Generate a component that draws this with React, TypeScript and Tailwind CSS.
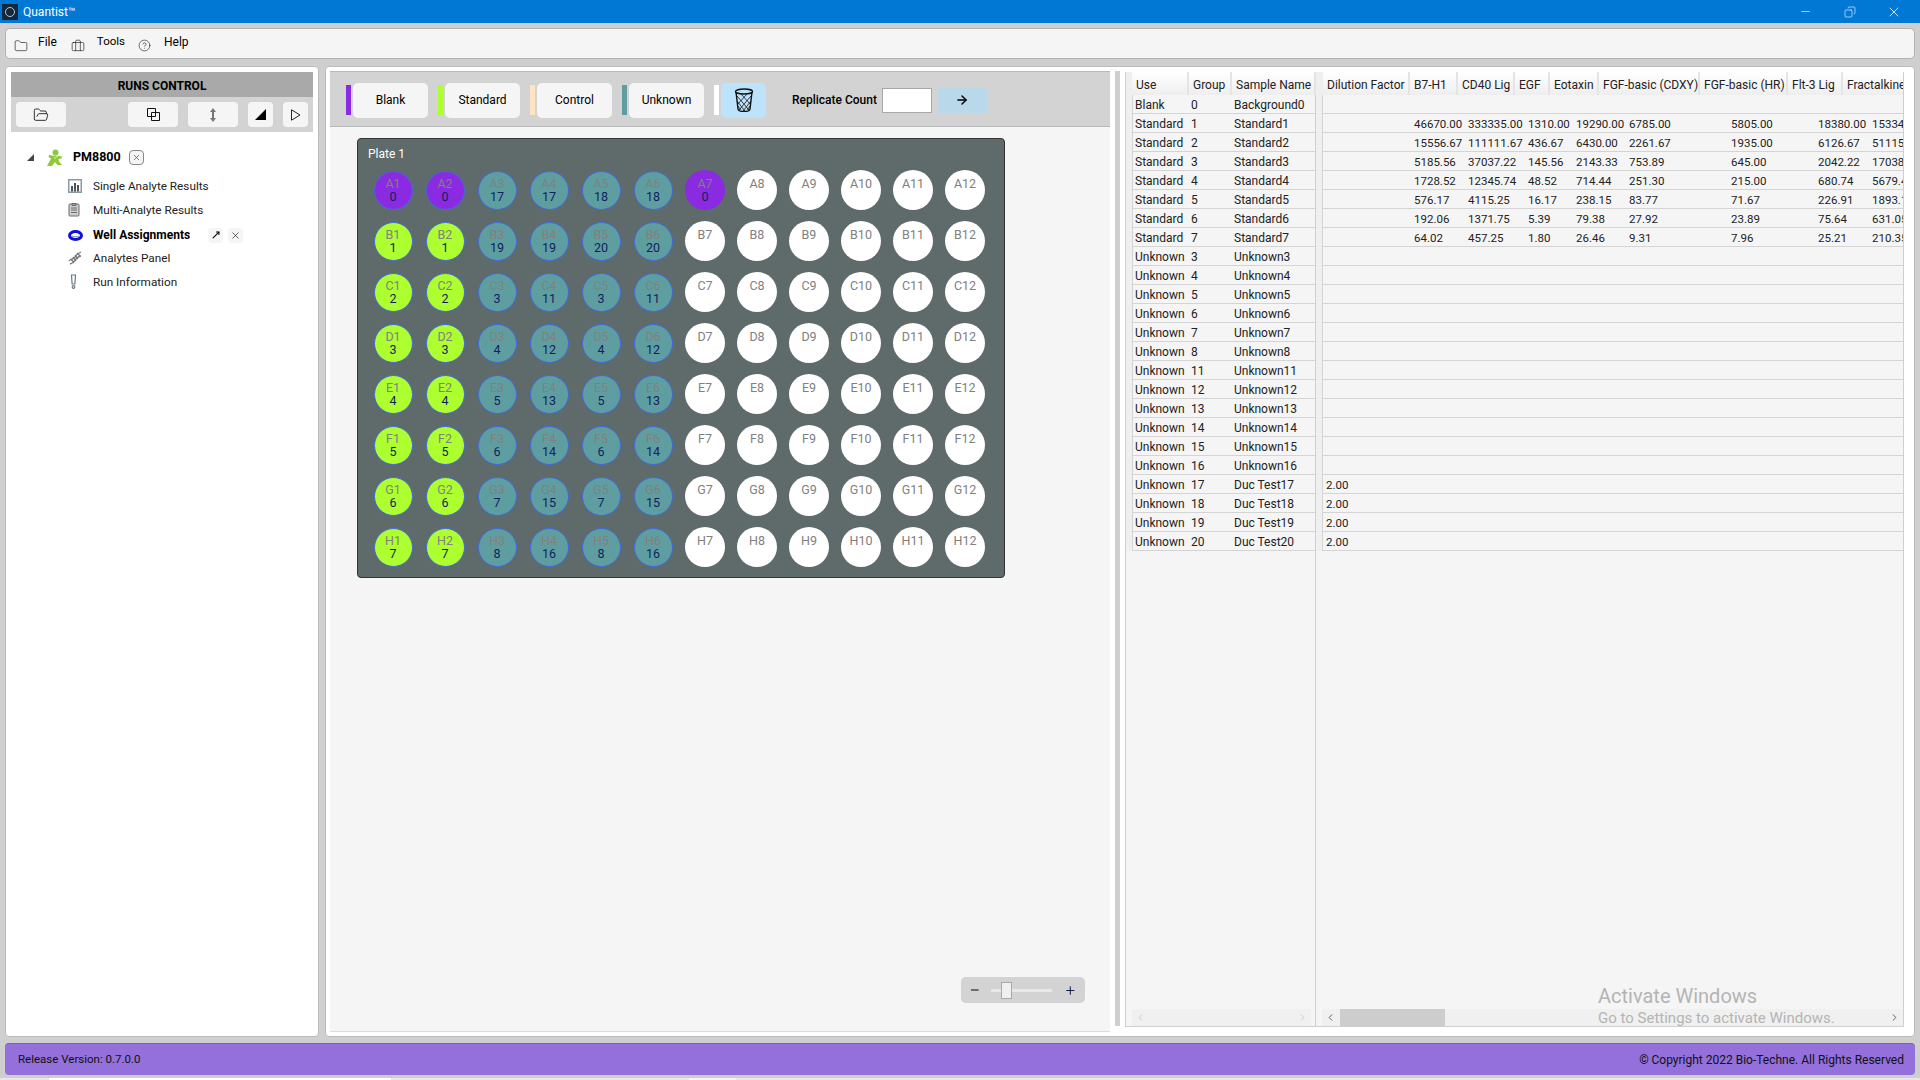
import {
  ArrowRight,
  ChevronLeft,
  ChevronRight,
  CircleHelp,
  Copy,
  Folder,
  FolderOpen,
  Minus,
  MoveUpRight,
  Plus,
  Briefcase,
  X,
} from 'lucide-react'

const WELL_COLORS = {
  blank: 'bg-[#8a2be2]',
  standard: 'bg-[#adff2f]',
  unknown: 'bg-[#5f9ea0]',
  empty: 'bg-white',
}

const ROW_LETTERS = ['A', 'B', 'C', 'D', 'E', 'F', 'G', 'H']
const UNKNOWN_GROUPS = [
  [17, 17, 18, 18],
  [19, 19, 20, 20],
  [3, 11, 3, 11],
  [4, 12, 4, 12],
  [5, 13, 5, 13],
  [6, 14, 6, 14],
  [7, 15, 7, 15],
  [8, 16, 8, 16],
]

const SAMPLES: [string, string, string, string?][] = [
  ['Blank', '0', 'Background0'],
  ['Standard', '1', 'Standard1'],
  ['Standard', '2', 'Standard2'],
  ['Standard', '3', 'Standard3'],
  ['Standard', '4', 'Standard4'],
  ['Standard', '5', 'Standard5'],
  ['Standard', '6', 'Standard6'],
  ['Standard', '7', 'Standard7'],
  ['Unknown', '3', 'Unknown3'],
  ['Unknown', '4', 'Unknown4'],
  ['Unknown', '5', 'Unknown5'],
  ['Unknown', '6', 'Unknown6'],
  ['Unknown', '7', 'Unknown7'],
  ['Unknown', '8', 'Unknown8'],
  ['Unknown', '11', 'Unknown11'],
  ['Unknown', '12', 'Unknown12'],
  ['Unknown', '13', 'Unknown13'],
  ['Unknown', '14', 'Unknown14'],
  ['Unknown', '15', 'Unknown15'],
  ['Unknown', '16', 'Unknown16'],
  ['Unknown', '17', 'Duc Test17', '2.00'],
  ['Unknown', '18', 'Duc Test18', '2.00'],
  ['Unknown', '19', 'Duc Test19', '2.00'],
  ['Unknown', '20', 'Duc Test20', '2.00'],
]

const CONCENTRATIONS: Record<number, string[]> = {
  1: ['46670.00', '333335.00', '1310.00', '19290.00', '6785.00', '5805.00', '18380.00', '153345.00'],
  2: ['15556.67', '111111.67', '436.67', '6430.00', '2261.67', '1935.00', '6126.67', '51115.00'],
  3: ['5185.56', '37037.22', '145.56', '2143.33', '753.89', '645.00', '2042.22', '17038.33'],
  4: ['1728.52', '12345.74', '48.52', '714.44', '251.30', '215.00', '680.74', '5679.44'],
  5: ['576.17', '4115.25', '16.17', '238.15', '83.77', '71.67', '226.91', '1893.15'],
  6: ['192.06', '1371.75', '5.39', '79.38', '27.92', '23.89', '75.64', '631.05'],
  7: ['64.02', '457.25', '1.80', '26.46', '9.31', '7.96', '25.21', '210.35'],
}

const HEADERS = [
  { label: 'Dilution Factor', w: 'w-[87px]' },
  { label: 'B7-H1', w: 'w-[48px]' },
  { label: 'CD40 Lig', w: 'w-[57px]' },
  { label: 'EGF', w: 'w-[35px]' },
  { label: 'Eotaxin', w: 'w-[49px]' },
  { label: 'FGF-basic (CDXY)', w: 'w-[101px]' },
  { label: 'FGF-basic (HR)', w: 'w-[88px]' },
  { label: 'Flt-3 Lig', w: 'w-[55px]' },
  { label: 'Fractalkine', w: 'w-[62px]' },
]

const DATA_WIDTHS = ['w-[54px]', 'w-[60px]', 'w-[48px]', 'w-[53px]', 'w-[102px]', 'w-[87px]', 'w-[54px]', 'w-[60px]']

function Well({ label, group, kind, ring }: { label: string; group?: number; kind: keyof typeof WELL_COLORS; ring?: boolean }) {
  return (
    <div
      className={`flex flex-col items-center justify-start place-self-center rounded-full text-[12.5px] leading-[13px] ${WELL_COLORS[kind]} ${
        ring ? 'h-[39px] w-[39px] border-[1.5px] border-[#4169e1] pt-[5px]' : 'h-10 w-10 pt-[7px]'
      }`}
    >
      <span className="text-[#808080]">{label}</span>
      {group !== undefined && <span className="text-[#0f1f5c]">{group}</span>}
    </div>
  )
}

function Plate() {
  return (
    <div className="ml-[27px] mt-[11px] h-[440px] w-[648px] rounded-[4px] border border-[#333] bg-[#5f6a6a] pl-[15px] pr-[18px] pt-[7px]">
      <div className="-ml-[5px] text-[12px] leading-[16px] text-white">Plate 1</div>
      <div className="mt-[8px] grid grid-cols-[repeat(12,40px)] grid-rows-[repeat(8,40px)] gap-x-3 gap-y-[11px]">
        {ROW_LETTERS.map((letter, r) =>
          Array.from({ length: 12 }, (_, c) => {
            const label = `${letter}${c + 1}`
            if (c < 2) {
              return <Well key={label} label={label} group={r} kind={r === 0 ? 'blank' : 'standard'} ring />
            }
            if (c < 6) {
              return <Well key={label} label={label} group={UNKNOWN_GROUPS[r][c - 2]} kind="unknown" ring />
            }
            if (label === 'A7') {
              return <Well key={label} label={label} group={0} kind="blank" />
            }
            return <Well key={label} label={label} kind="empty" />
          }),
        )}
      </div>
    </div>
  )
}

function LegendButton({ color, label }: { color: string; label: string }) {
  return (
    <div className="flex items-center gap-[2px]">
      <div className={`h-[30px] w-[5px] ${color}`} />
      <button className="h-[35px] w-[75px] rounded-[5px] bg-[#f5f5f5] text-[12px]">{label}</button>
    </div>
  )
}

function TrashIcon() {
  return (
    <svg width="20" height="24" viewBox="0 0 20 24" fill="none" stroke="#111" strokeWidth="1">
      <ellipse cx="10" cy="3.5" rx="8.5" ry="2.5" strokeWidth="1.4" />
      <path d="M2 4l2 17c.2 1.5 3 2.500 6 2.500s5.800-1 6-2.500l2-17" strokeWidth="1.400" />
      <path d="M3 8l12 14M3 13l8 10M4 18l3 4M17 8L5 22M17 13L9 23M16 18l-3 4M7 6l10 11M13 6L3 17" strokeWidth=".8" />
    </svg>
  )
}

function TreeItem({ icon, label, bold, children }: { icon: React.ReactNode; label: string; bold?: boolean; children?: React.ReactNode }) {
  return (
    <div className="flex h-6 items-center">
      <div className="flex w-[25px] shrink-0 justify-start">{icon}</div>
      <span className={bold ? 'font-bold text-black' : 'text-[11.75px] text-[#222]'}>{label}</span>
      {children}
    </div>
  )
}

function Sidebar() {
  return (
    <aside className="w-[314px] shrink-0 rounded-[4px] border border-[#bbb] bg-white p-[5px] text-[12px]">
      <div className="flex h-[25px] items-center justify-center bg-[#a9a9a9] pt-[2px] font-bold text-black">RUNS CONTROL</div>
      <div className="flex h-[35px] items-center bg-[#d3d3d3] px-[5px]">
        <button className="flex h-[25px] w-[50px] items-center justify-center rounded-[4px] bg-[#f5f5f5]">
          <FolderOpen size={16} strokeWidth={1.2} />
        </button>
        <button className="ml-[62px] flex h-[25px] w-[50px] items-center justify-center rounded-[4px] bg-[#f5f5f5]">
          <svg width="13" height="13" viewBox="0 0 13 13" fill="none" stroke="#111" strokeWidth="1">
            <path d="M.5.5h8v8h-8zM4.500 4.500h8v8h-8z" />
          </svg>
        </button>
        <button className="ml-[10px] flex h-[25px] w-[50px] items-center justify-center rounded-[4px] bg-[#f5f5f5]">
          <svg width="8" height="14" viewBox="0 0 8 14" fill="#777">
            <path d="M4 0l3 4H5v6h2l-3 4-3-4h2V4H1z" />
          </svg>
        </button>
        <button className="ml-[10px] flex h-[25px] w-[25px] items-center justify-center rounded-[4px] bg-[#f5f5f5]">
          <svg width="11" height="11" viewBox="0 0 11 11">
            <path d="M11 0v11H0z" />
          </svg>
        </button>
        <button className="ml-[10px] flex h-[25px] w-[25px] items-center justify-center rounded-[4px] bg-[#f5f5f5]">
          <svg width="10" height="12" viewBox="0 0 10 12" fill="none" stroke="#222" strokeWidth="1">
            <path d="M.5.800l8.500 5.200-8.500 5.200z" />
          </svg>
        </button>
      </div>
      <div className="ml-[16px] mt-[13px] flex h-[24px] items-center">
        <svg width="7" height="7" viewBox="0 0 7 7" fill="#444">
          <path d="M7 0v7H0z" />
        </svg>
        <svg className="ml-[13px]" width="16" height="17" viewBox="0 0 16 17" fill="#8fc93a">
          <circle cx="8.500" cy="3.500" r="3" />
          <path d="M2 6l5 .8h4l4 .7-.5 2-3 .5.500 2.500 3 3.500h-4.500L8 13l-3 4H0l2.500-4.500L4 9.500 1.500 8z" />
          <circle cx="8" cy="9" r=".8" fill="#e8f5d0" />
          <circle cx="10" cy="7.800" r=".8" fill="#e8f5d0" />
        </svg>
        <span className="ml-[10px] text-[12.5px] font-bold text-black">PM8800</span>
        <button className="ml-[8px] flex h-[15px] w-[15px] items-center justify-center rounded-[4px] border border-[#888] bg-[#f5f5f5]">
          <X size={9} strokeWidth={2} className="text-[#e02020]" />
        </button>
      </div>
      <div className="ml-[57px] mt-[6px] flex flex-col">
        <TreeItem
          label="Single Analyte Results"
          icon={
            <svg width="14" height="14" viewBox="0 0 14 14" fill="#4a5560" className="-mt-[3px]">
              <path d="M0 0h14v14H0zM1.500 1.500v11h11v-11z" fill="#8a9aa8" />
              <path d="M3 7h2v5.500H3zM6 4h2v8.500H6zM9 6h2v6.500H9z" />
            </svg>
          }
        />
        <TreeItem
          label="Multi-Analyte Results"
          icon={
            <svg width="12" height="15" viewBox="0 0 12 15" fill="none" stroke="#6a6a6a" className="-mt-[3px]">
              <rect x="1" y="2" width="10" height="12" rx="1" fill="#cfcfcf" />
              <path d="M4 1.500h4v2H4zM3 6h6M3 8h6M3 10.500h6" />
            </svg>
          }
        />
        <TreeItem
          label="Well Assignments"
          bold
          icon={
            <svg width="15" height="11" viewBox="0 0 15 11" fill="none">
              <ellipse cx="7.500" cy="5.500" rx="6" ry="4" stroke="#1010e0" strokeWidth="3" />
              <path d="M4 6c2 1 5 1 7 0" stroke="#7a8aa0" strokeWidth="1" />
            </svg>
          }
        >
          <button className="ml-[18px] flex h-[15px] w-[15px] items-center justify-center rounded-[4px] bg-[#f5f5f5]">
            <MoveUpRight size={10} strokeWidth={2.500} className="text-black" />
          </button>
          <button className="ml-[5px] flex h-[15px] w-[15px] items-center justify-center rounded-[4px] bg-[#f5f5f5]">
            <X size={11} strokeWidth={1.500} className="text-[#222]" />
          </button>
        </TreeItem>
        <TreeItem
          label="Analytes Panel"
          icon={
            <svg width="14" height="14" viewBox="0 0 14 14" fill="none" stroke="#777" strokeWidth="1.300" className="-mt-[3px]">
              <path d="M1 10c2-3 3-1 5-3s2-4 7-6M2 13c4-1 4-3 6-5s3-3 5-3M3 8l3 4M5 6l3 4M7 4l3 4M9 2l3 3" />
            </svg>
          }
        />
        <TreeItem
          label="Run Information"
          icon={
            <svg width="7" height="15" viewBox="0 0 7 15" fill="none" stroke="#6a7a85" strokeWidth="1.200" className="-mt-[3px] ml-[2px]">
              <path d="M1.500 1h4l-.6 9H2.100z" />
              <circle cx="3.500" cy="13" r="1.300" />
            </svg>
          }
        />
      </div>
    </aside>
  )
}

function ScrollBar({ thumb, faded }: { thumb?: boolean; faded?: boolean }) {
  const arrow = faded ? 'text-[#c8c8c8]' : 'text-[#555]'
  return (
    <div className="flex h-[17px] w-full items-center justify-between bg-[#f0f0f0]">
      <ChevronLeft size={11} className={`ml-[3px] shrink-0 ${arrow}`} />
      {thumb && <div className="ml-[4px] h-[17px] w-[105px] shrink-0 bg-[#cdcdcd]" />}
      <div className="flex-1" />
      <ChevronRight size={11} className={`mr-[3px] shrink-0 ${arrow}`} />
    </div>
  )
}

function HeaderCell({ label, w }: { label: string; w: string }) {
  return (
    <div className={`flex h-full shrink-0 items-center overflow-hidden whitespace-nowrap border-r-2 border-[#e4e4e4] bg-gradient-to-b from-white to-[#eeeeee] pl-[4px] pt-[2px] ${w}`}>
      {label}
    </div>
  )
}

function SampleTables() {
  return (
    <section className="mb-[5px] mr-[6px] mt-[1px] flex w-[779px] shrink-0 overflow-hidden border-b border-r border-[#cfcfcf] bg-[#f5f5f5] text-[12px] text-[#222]">
      <div className="flex w-[191px] shrink-0 flex-col border-x border-[#cfcfcf] bg-[#efefef]">
        <div className="ml-[6px] flex h-[23px] shrink-0">
          <HeaderCell label="Use" w="w-[57px]" />
          <HeaderCell label="Group" w="w-[43px]" />
          <HeaderCell label="Sample Name" w="w-[84px]" />
        </div>
        {SAMPLES.map(([use, group, name]) => (
          <div key={name} className="ml-[6px] flex h-[19px] shrink-0 items-center border-b border-l border-[#d4d4d4] bg-[#f5f5f5] pl-[2px] pt-[2px] leading-[16px]">
            <span className="w-[56px] shrink-0">{use}</span>
            <span className="w-[43px] shrink-0">{group}</span>
            <span>{name}</span>
          </div>
        ))}
        <div className="flex-1 bg-[#f5f5f5]" />
        <div className="bg-[#f5f5f5] pl-[6px] pr-[4px]">
          <ScrollBar faded />
        </div>
      </div>
      <div className="flex min-w-0 flex-1 flex-col bg-[#efefef]">
        <div className="ml-[6px] flex h-[23px] shrink-0 pl-[1px]">
          {HEADERS.map((h) => (
            <HeaderCell key={h.label} label={h.label} w={h.w} />
          ))}
        </div>
        {SAMPLES.map(([, group, name, dilution], i) => (
          <div key={name} className="ml-[6px] flex h-[19px] shrink-0 items-center overflow-hidden whitespace-nowrap border-b border-l border-[#d4d4d4] bg-[#f5f5f5] pl-[3px] pt-[2px] text-[11.5px] leading-[16px]">
            <span className="w-[88px] shrink-0">{dilution}</span>
            {i >= 1 &&
              i <= 7 &&
              CONCENTRATIONS[Number(group)].map((value, j) => (
                <span key={j} className={`shrink-0 ${DATA_WIDTHS[j]}`}>
                  {value}
                </span>
              ))}
          </div>
        ))}
        <div className="relative flex-1 bg-[#f5f5f5]">
          <div className="absolute bottom-[-19px] left-[282px] z-10 whitespace-nowrap text-[#b4b4b4]">
            <div className="text-[20px] leading-[24px]">Activate Windows</div>
            <div className="mt-[1px] text-[15px] leading-[19px]">Go to Settings to activate Windows.</div>
          </div>
        </div>
        <div className="bg-[#f5f5f5] pl-[6px]">
          <ScrollBar thumb />
        </div>
      </div>
    </section>
  )
}

export default function App() {
  return (
    <div className="flex h-[1080px] w-[1920px] flex-col overflow-hidden bg-[#cfcfcf] font-['Roboto',sans-serif] text-[12px] text-black">
      <header className="flex h-[23px] shrink-0 items-center bg-[#0078d4] text-white">
        <div className="ml-[2px] flex h-[16px] w-[16px] items-center justify-center bg-[#14283c]">
          <div className="h-[10px] w-[10px] rounded-full border border-[#b8c4cc]" />
        </div>
        <span className="ml-[5px] text-[12px]">Quantist™</span>
        <div className="ml-auto flex items-center">
          <Minus size={13} strokeWidth={1.2} />
          <Copy size={12} strokeWidth={1.2} className="ml-[32px] -scale-x-100" />
          <X size={16} strokeWidth={1.2} className="ml-[30px] mr-[18px]" />
        </div>
      </header>

      <nav className="mx-[5px] mt-[5px] flex h-[31px] shrink-0 items-center rounded-[5px] border border-[#b4b4b4] bg-[#f5f5f5] pl-[8px]">
        <Folder size={14} strokeWidth={1} className="mt-[4px]" />
        <span className="mb-[3px] ml-[10px]">File</span>
        <Briefcase size={14} strokeWidth={1} className="ml-[14px] mt-[4px]" />
        <span className="mb-[3px] ml-[12px] text-[11.5px]">Tools</span>
        <CircleHelp size={13} strokeWidth={1} className="ml-[13px] mt-[4px]" />
        <span className="mb-[3px] ml-[13px]">Help</span>
      </nav>

      <main className="mt-[7px] flex h-[971px] shrink-0 gap-[6px] px-[5px]">
        <Sidebar />
        <div className="flex min-w-0 flex-1 rounded-[4px] border border-[#bbb] bg-white p-[4px]">
          <div className="flex w-[780px] shrink-0 flex-col border-b border-[#dcdcdc] bg-[#f5f5f5]">
            <div className="flex h-[56px] shrink-0 items-center gap-[10px] border-y border-[#b8b8b8] bg-[#d3d3d3] pl-[16px] pt-[2px]">
              <LegendButton color="bg-[#8a2be2]" label="Blank" />
              <LegendButton color="bg-[#adff2f]" label="Standard" />
              <LegendButton color="bg-[#ffe4c4]" label="Control" />
              <LegendButton color="bg-[#5f9ea0]" label="Unknown" />
              <div className="flex items-center gap-[2px]">
                <div className="h-[30px] w-[5px] bg-white" />
                <button className="flex h-[35px] w-[45px] items-center justify-center rounded-[5px] bg-[#bde3fb]">
                  <TrashIcon />
                </button>
              </div>
              <span className="ml-[16px] whitespace-nowrap font-medium">Replicate Count</span>
              <div className="-ml-[5px] h-[25px] w-[50px] border border-[#a8a8a8] bg-white" />
              <button className="-ml-[5px] flex h-[25px] w-[50px] items-center justify-center bg-[#b9d9ea]">
                <ArrowRight size={14} strokeWidth={2.500} />
              </button>
            </div>
            <Plate />
            <div className="flex-1" />
            <div className="mb-[28px] ml-[631px] flex h-[26px] w-[124px] items-center rounded-[5px] bg-[#d3d3d3] px-[8px]">
              <Minus size={12} strokeWidth={2} />
              <div className="relative ml-[10px] h-[3px] w-[64px] bg-[#e8e8e8]">
                <div className="absolute left-[10px] top-[-7px] h-[17px] w-[11px] border border-[#aaa] bg-[#f0f0f0]" />
              </div>
              <Plus size={13} strokeWidth={2} className="ml-[12px] text-[#102050]" />
            </div>
          </div>
          <div className="mb-[6px] ml-[5px] mr-[5px] w-[5px] shrink-0 bg-[#cfcfcf]" />
          <SampleTables />
        </div>
      </main>

      <footer className="mx-[5px] mt-[6px] flex h-[32px] shrink-0 items-center justify-between rounded-[4px] border-t border-[#7b5cc0] bg-[#9370db] pl-[13px] pr-[11px] text-[12px] text-[#111]">
        <span className="text-[11.5px]">Release Version: 0.7.0.0</span>
        <span>© Copyright 2022 Bio-Techne. All Rights Reserved</span>
      </footer>

      <div className="mt-[3px] flex h-[2px] shrink-0 bg-[#e8e8e8]">
        <div className="ml-[49px] w-[342px] bg-white" />
        <div className="ml-[298px] w-[47px] bg-[#f5f5f5]" />
      </div>
    </div>
  )
}
